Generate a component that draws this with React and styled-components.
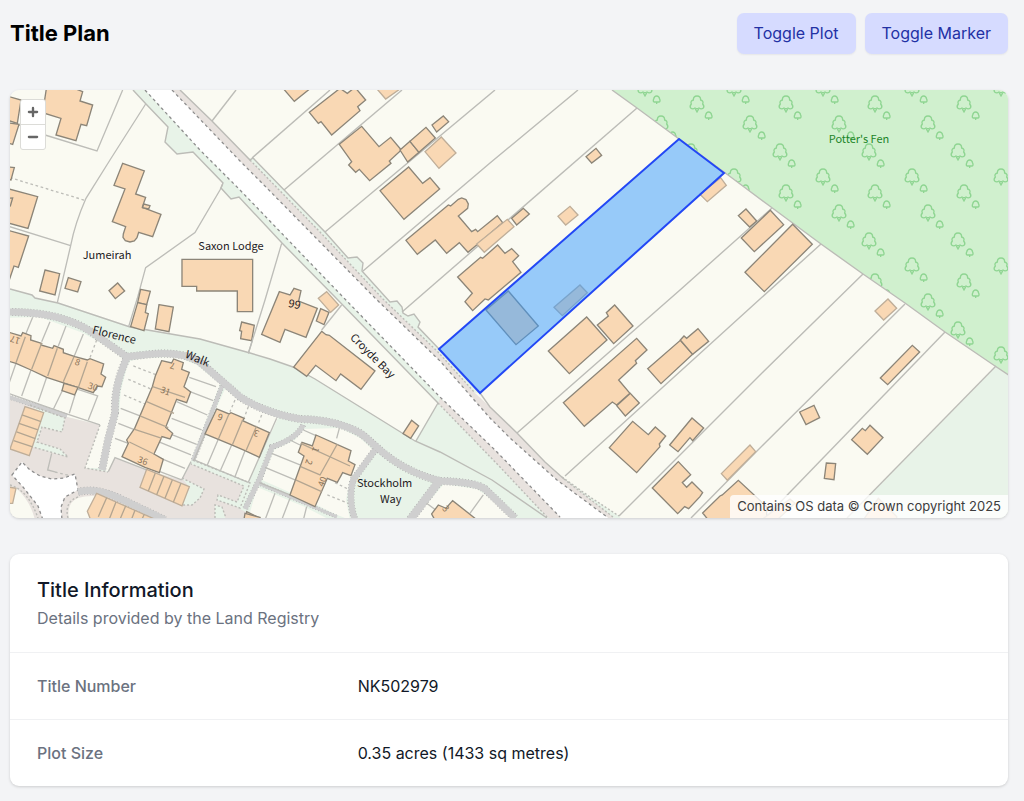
import { useState } from 'react';
import styled, { createGlobalStyle } from 'styled-components';
import { FiPlus, FiMinus } from 'react-icons/fi';

const ground = {
  woods:
    '612,90 637,108 679,139 724,172 771,207 821,244 863,274 905,303 945,332 995,366 1008,375 1020,384 1020,80 598,80',
  field: '996,367 1020,384 1020,530 836,530',
  verge:
    '133,90 146,104 168,127 165,142 177,154 193,152 223,183 221,188 231,199 239,197 282,243 335,297 438,403 450,403 250,170 172,80 124,80',
  common:
    '0,287 10,289 32,295 35,298 58,303 130,327 200,339 250,353 270,359 293,367 315,379 415,441 438,403 500,465 560,525 0,530',
  eastVerge:
    '253,158 325,232 348,258 357,257 363,263 362,271 390,302 397,301 402,307 403,313 408,316 414,314 420,322 418,327 439,349 480,393 470,393 240,158',
  southVerge: '562,477 590,497 619,516 622,520 608,520 555,472',
  pavementEast:
    '170,80 180,90 212,121 250,160 320,232 383,299 438,352 475,393 490,407 517,433 545,462 564,479 613,517 600,530 160,90',
  pavementWest: '440,398 438,403 500,467 547,517 575,530 575,517',
  road: '135,80 145,90 200,150 240,190 343,297 440,397 495,450 560,517 575,532 625,532 607,517 557,480 510,438 490,418 440,361 375,298 260,181 240,161 172,90 162,80',
};

const gardens = [
  '0,318 40,317 83,333 110,348 124,360 120,370 113,390 112,413 105,440 100,468 85,468 100,425 67,417 0,396',
  '130,361 143,358 177,357 197,365 220,384 192,458 190,463 181,480 147,470 115,458 108,472 105,470 111,440 119,413 121,390 127,367',
  '225,389 243,402 278,418 248,482 193,460',
  '303,429 340,428 360,438 373,450 350,480 346,500 350,520 335,514 307,500 262,480 274,450 295,440',
  '257,487 305,507 330,520 248,520',
  '444,484 477,489 497,503 514,520 413,520',
];

const yard =
  '0,394 67,417 100,425 85,468 108,472 115,458 147,470 181,480 192,462 247,487 238,508 262,520 0,520';

const lawns = [
  '30,405 65,418 62,432 42,427 37,442 60,449 68,457 33,447 43,414',
  '182,478 204,489 200,498 192,505 180,505 190,488',
  '193,460 250,483 240,508 217,500 218,495 237,502 244,486 191,464',
  '215,505 222,507 226,520 215,520',
];

const turning =
  '12,475 22,462 30,470 40,476 52,479 64,478 75,474 78,490 65,497 61,507 62,520 43,520 38,506 23,487';

const kerbs = [
  'M145,90 L200,150 L240,190 L343,297 L440,397 L495,450 L560,517',
  'M172,90 L240,161 L260,181 L375,298 L440,361 L490,418 L510,438 L557,480 L607,517',
];

const footpaths = [
  { w: 7, d: 'M0,312 L10,312 Q60,312 90,331 L127,357' },
  { w: 7, d: 'M125,357 L143,355 Q180,350 200,362 L223,382 L240,397 Q265,413 300,419 Q340,420 363,435 L380,450 Q405,472 440,481 Q475,482 485,489 L515,518' },
  { w: 7, d: 'M127,357 L123,367 Q114,390 115,413 L108,440 L102,470' },
  { w: 4, d: 'M222,386 L193,461' },
  { w: 5, d: 'M303,425 Q298,438 272,447 L260,478 L245,509' },
  { w: 6, d: 'M375,450 L353,480 Q348,500 355,520' },
  { w: 3, d: 'M258,483 L307,504 L337,517' },
  { w: 8, d: 'M440,480 L410,520' },
  { w: 7, d: 'M78,492 Q97,487 123,500 L165,520' },
  { w: 4, d: 'M0,394 L67,416' },
];

const boundaries = [
  'M252,158 L330,90',
  'M284,190 L402,90',
  'M325,232 L495,90',
  'M363,271 L490,163 L578,90',
  'M402,312 L637,108',
  'M517,433 L680,290 L772,208',
  'M565,476 L760,299 L821,244',
  'M619,516 L760,375 L863,274',
  'M691,518 L756,452 L905,304',
  'M765,518 L945,332',
  'M847,518 L996,366',
  'M212,121 L236,90',
  'M612,90 L637,108 L679,139 L724,172 L771,207 L821,244 L863,274 L905,303 L945,332 L995,366 L1010,376',
  'M133,90 L146,104 L168,127 L165,142 L177,154 L193,152 L223,183 L221,188 L231,199 L239,197 L282,243 L335,297 L438,403',
  'M180,90 L212,121 L250,160 L253,158 L325,232 L348,258 L357,257 L363,263 L362,271 L390,302 L397,301 L402,307 L403,313 L408,316 L414,314 L420,322 L418,327 L439,349',
  'M480,393 L490,407 L517,433 L545,462 L564,479',
  'M10,289 L32,295 L35,298 L58,303 L130,327 L200,339 L250,353 L270,359 L293,367 L315,379 L415,441 L440,452 L492,480 L547,518',
  'M438,403 L416,441',
];

const dotted = [
  'M250,160 L320,232 L383,299 L438,352 L475,393',
  'M564,479 L613,517',
  'M562,477 L590,497 L619,516',
  'M438,403 L500,467 L547,517',
  'M100,425 L85,468 L108,472',
  'M30,405 L65,418 L62,432 L42,427 L37,442 L60,449 L68,457 L33,447',
  'M182,478 L204,489 L200,498 L192,505 L180,505',
  'M193,460 L250,483 L240,508 L217,500 L218,495 L237,502 L244,486 L191,464',
  'M215,518 L215,505 L222,507 L226,518',
  'M10,485 Q28,490 38,518',
  'M68,518 Q64,502 78,497',
];

/* Survey sheets. Shapes are digitised at three units to the map pixel. */
const sheets = [
  {
    x: 0,
    y: 80,
    lots: [
      'M368,30 L291,213 L135,165',
      'M437,72 L330,240 L258,355 Q225,430 212,497 L172,668',
      'M20,437 L212,497',
      'M668,312 L660,330 L585,458 L437,563 L412,655 L386,740',
      'M20,128 L60,136',
    ],
    dashes: ['M30,293 L258,362'],
    buildings: [
      '140,20 215,22 248,35 240,63 278,75 260,137 243,133 228,182 168,165 183,115 128,98',
      '20,48 63,60 52,130 20,120',
      '20,128 57,133 38,193 20,188',
      '20,260 43,263 33,300 20,296',
      '20,325 113,350 84,445 20,428',
      '20,355 38,354 31,378 20,376',
      '20,450 86,468 55,562 42,558 28,600 20,600',
      '368,250 433,273 407,342 437,352 427,382 483,403 458,470 416,457 411,473 403,483 390,486 376,482 369,472 370,462 377,440 337,425 375,327 342,316',
      '431,372 450,377 446,387 428,383',
      '135,570 179,581 165,645 119,633',
      '205,593 243,605 233,636 195,625',
      '353,609 374,633 346,656 327,632',
      '546,538 758,538 758,695 712,695 712,633 590,633 590,619 546,619',
    ],
  },
  {
    x: 0,
    y: 290,
    lots: [
      'M98,82 L76,135 M150,95 L125,155 M198,108 L175,168 M250,132 L222,200',
      'M48,220 L20,300 M93,240 L65,318 M140,262 L115,335 M188,300 L160,358 M225,315 L208,370 M234,298 L293,318 L265,390',
      'M20,308 L200,372 L300,405',
      'M568,262 L648,290 M570,305 L640,332 M530,335 L622,375 M515,385 L605,420 M510,432 L590,463 M475,455 L573,495 M470,500 L555,535 M480,545 L545,570',
      'M362,355 L420,378 M355,400 L405,420 M345,445 L385,460',
      'M325,545 L345,503 L440,540 M573,515 L545,570',
      'M615,432 L582,510 L745,577 M655,448 L622,525 M695,465 L662,540 M735,482 L705,560 M778,502 L745,577 L830,385',
      'M155,490 L143,540 L165,546',
      'M757,152 L745,190',
    ],
    dashes: [
      'M290,150 L268,208',
      'M400,228 L470,255 M385,268 L455,298 M372,315 L435,342',
      'M705,330 L690,365 M745,350 L733,382 M785,375 L775,400',
      'M165,546 L205,556',
    ],
    buildings: [
      '422,-2 451,4 440,44 413,38',
      '413,38 440,44 436,68 445,71 432,122 392,110',
      '477,44 520,51 507,125 466,117',
      '725,96 763,106 755,152 722,146 725,124 719,122',
      '20,125 63,138 68,128 93,137 92,150 125,160 123,165 158,175 162,167 190,178 190,188 225,200 262,210 270,206 311,222 303,252 317,262 306,290 292,288 280,308 235,293 188,278 140,262 93,240 48,220 20,212',
      '192,280 234,292 224,315 186,302',
      '485,212 515,219 521,207 550,218 545,238 568,247 552,290 572,306 560,338 530,328 497,412 518,430 510,447 486,440 462,492 490,508 478,548 435,532 366,500 385,460 380,450 404,415 457,290 466,258',
      '650,357 687,372 693,368 733,385 728,392 808,428 778,502 735,482 695,465 655,448 615,432',
      '740,665 790,690 735,700',
    ],
    sheds: [
      '75,350 131,368 88,497 30,477',
      '440,538 568,590 546,648 420,592',
      '290,610 470,690 470,710 280,710 262,664',
      '20,590 48,595 38,640 20,640',
    ],
    walls: [
      'M76,140 L48,218 M125,160 L95,238 M172,175 L143,258 M222,200 L190,275 M262,215 L235,293',
      'M66,375 L123,395 M57,400 L114,420 M50,426 L106,446 M41,452 L98,471',
      'M458,290 L555,322 M440,335 L522,370 M420,378 L505,413 M404,418 L486,445 M388,456 L462,492',
      'M466,549 L445,603 M492,559 L470,614 M517,570 L495,625 M543,580 L520,637',
      'M320,623 L295,680 M348,636 L325,695 M377,648 L355,700 M405,661 L390,700 M433,673 L420,700',
      'M687,372 L655,448 M728,390 L697,465 M770,408 L738,482',
    ],
    labels: [
      { x: 340, y: 146, r: 14, t: 'Florence' },
      { x: 588, y: 216, r: 22, t: 'Walk' },
      { x: 230, y: 226, r: 17, t: '8', house: true },
      { x: 276, y: 299, r: 17, t: '30', house: true },
      { x: 48, y: 140, r: 197, t: '17', house: true },
      { x: 521, y: 218, r: 197, t: '7', house: true },
      { x: 493, y: 312, r: 20, t: '31', house: true },
      { x: 425, y: 521, r: 20, t: '36', house: true },
      { x: 663, y: 372, r: 197, t: '6', house: true },
      { x: 772, y: 421, r: 197, t: '3', house: true },
    ],
  },
  {
    x: 240,
    y: 80,
    lots: ['M125,490 L75,660 L25,820'],
    buildings: [
      '118,12 163,64 225,14 225,0 118,0',
      '208,97 300,25 322,40 345,22 377,60 353,80 360,92 275,165 243,125 235,130',
      '298,193 365,139 417,200 452,172 484,210 448,243 453,250 389,302 358,268 347,277 326,255 335,245',
      '480,210 510,184 537,217 503,246',
      '510,184 558,142 586,174 537,217',
      '576,135 610,108 626,125 590,156',
      '420,332 506,261 548,310 570,293 599,327 492,418',
      '498,481 625,375 632,378 655,358 665,354 678,359 685,372 683,385 655,408 695,455 707,448 713,455 772,407 788,428 710,495 684,517 658,488 620,520 586,480 532,523',
      '653,591 722,532 728,535 773,495 795,520 815,506 836,527 818,545 843,577 745,660 735,657 698,692 675,665 697,640',
    ],
    sheds: ['405,20 490,20 437,57', '555,215 604,171 648,219 597,265', '710,492 802,418 822,440 733,517'],
  },
  {
    x: 240,
    y: 290,
    lots: [
      'M305,45 L245,120',
      'M190,420 L228,437 M298,415 L290,445 M150,450 L186,468 M95,490 L180,525 M75,532 L165,570',
      'M58,578 L150,615 M105,610 L75,690 M150,625 L125,690 M200,650 L190,690',
      'M560,640 L590,662 M730,615 L690,670',
    ],
    dashes: ['M285,578 L330,600 M262,615 L325,640'],
    buildings: [
      '118,5 150,15 162,-5 183,2 176,33 232,55 198,142 135,118 120,157 65,133',
      '242,56 267,67 252,104 229,93',
      '245,124 258,134 268,136 405,243 363,298 302,252 288,272 227,226 200,259 161,231',
      '515,391 536,408 512,445 489,431',
      '228,435 333,482 325,513 345,524 333,557 308,548 292,577 262,565 225,650 150,615 192,498 175,487 186,457 217,468',
      '575,672 595,645 618,655 638,632 705,685 705,700 590,700',
      '15,670 60,682 50,700 10,700',
    ],
    sheds: ['235,25 260,5 296,45 272,67'],
    walls: ['M182,460 L330,528 M292,462 L240,555 L182,530 M167,570 L245,605'],
    labels: [
      { x: 161, y: 54, r: 12, t: '99' },
      { x: 390, y: 206, r: 45, t: 'Croyde Bay' },
      { x: 434, y: 590, r: 0, t: 'Stockholm' },
      { x: 452, y: 638, r: 0, t: 'Way' },
      { x: 218, y: 475, r: 110, t: '1', house: true },
      { x: 198, y: 513, r: 110, t: '2', house: true },
      { x: 256, y: 578, r: 290, t: '40', house: true },
      { x: 610, y: 662, r: 50, t: '3', house: true },
    ],
  },
  {
    x: 490,
    y: 80,
    buildings: [
      '65,415 100,385 118,402 80,435',
      '288,230 318,205 335,226 305,249',
      '745,407 768,387 800,423 779,441',
      '754,474 841,391 881,434 793,515',
      '765,577 908,433 967,493 823,635',
    ],
    sheds: ['204,409 240,379 264,405 227,435', '630,343 692,293 709,316 652,365'],
  },
  {
    x: 490,
    y: 290,
    buildings: [
      '-12,60 55,3 145,108 78,164',
      '175,183 290,81 351,150 238,251',
      '322,105 355,78 349,68 374,45 429,108 371,161',
      '220,338 440,145 471,180 436,212 440,220 386,270 420,310 380,345 367,336 283,409',
      '380,347 421,310 448,339 406,378',
      '473,236 571,151 608,193 513,281',
      '571,150 582,138 590,145 624,116 656,154 608,193',
      '358,473 428,394 475,434 496,411 527,438 508,462 510,470 440,548',
      '539,465 606,384 641,414 608,452 600,443 564,485',
      '487,594 565,515 602,554 577,578 590,592 606,576 638,608 630,620 596,656 584,650 563,671',
      '638,669 690,618 697,615 745,571 830,650 830,690 655,690',
    ],
    sheds: ['192,52 270,-15 292,8 217,77', '694,551 780,465 797,485 712,571'],
  },
  {
    x: 750,
    y: 290,
    buildings: [
      '391,264 487,166 509,186 413,284',
      '149,366 192,346 209,383 168,404',
      '305,449 337,415 346,422 360,406 399,443 352,493',
      '229,519 257,521 252,569 223,565',
    ],
    sheds: ['375,63 414,27 440,55 401,90', '20,700 120,627 135,640 70,700', '340,690 385,625 440,680 440,700'],
  },
];

const trees = [
  [36, 14],
  [0, 34],
  [30, 62],
  [73, 87],
];

const placeNames = [
  { x: 107, y: 259, t: 'Jumeirah' },
  { x: 231, y: 250, t: 'Saxon Lodge' },
];

const plotPoints = '439,349 679,139 724,173 480,393';

const Woodland = () => {
  const cells = [];
  for (let col = -2; col < 4; col++) {
    for (let row = -1; row < 4; row++) {
      trees.forEach(([x, y]) => {
        cells.push([750 + col * 89 + x, 90 + row * 89 + y]);
      });
    }
  }

  return (
    <g clipPath="url(#woods)">
      {cells.map(([x, y]) => (
        <Tree key={`${x}-${y}`} transform={`translate(${x} ${y}) scale(0.333)`}>
          <path d="M-11,-12 Q-11,-24 0,-24 Q11,-24 11,-12 Q21,-9 17,0 Q23,7 19,12 Q13,17 6,12 Q0,16 -6,12 Q-13,17 -19,12 Q-23,7 -17,0 Q-21,-9 -11,-12Z M-5,15 L0,24 L5,15" />
          <path d="M31,42 H28 Q23,41 26,33 Q28,24 35,24 Q42,24 44,33 Q47,41 42,42 H31 M35,42 V48" />
        </Tree>
      ))}
    </g>
  );
};

const Sheet = ({ sheet }) => {
  const { x, y, lots = [], dashes = [], buildings = [], sheds = [], walls = [] } = sheet;

  return (
    <g transform={`translate(${x} ${y}) scale(0.3333)`}>
      {lots.map((d) => (
        <Lot key={d} d={d} />
      ))}
      {dashes.map((d) => (
        <Lot key={d} d={d} $dashed />
      ))}
      {buildings.map((points) => (
        <Building key={points} points={points} />
      ))}
      {sheds.map((points) => (
        <Building key={points} points={points} $light />
      ))}
      {walls.map((d) => (
        <Lot key={d} d={d} $wall />
      ))}
    </g>
  );
};

const SheetLabels = ({ sheet }) =>
  (sheet.labels || []).map(({ x, y, r, t, house }) => (
    <MapLabel
      key={t + x}
      $house={house}
      transform={`translate(${sheet.x + x / 3} ${sheet.y + y / 3}) rotate(${r})`}
    >
      {t}
    </MapLabel>
  ));

const PlanMap = ({ showPlot, showMarker }) => (
  <MapSvg viewBox="10 90 998 428" role="img" aria-label="Title plan map">
    <defs>
      <clipPath id="woods">
        <polygon points={ground.woods} />
      </clipPath>
    </defs>
    <rect x="0" y="80" width="1020" height="450" fill="#fafaf2" />
    <polygon points={ground.woods} fill="#d0f0ce" />
    <Woodland />
    <polygon points={ground.field} fill="#e8f3e8" />
    <polygon points={ground.common} fill="#e8f3e8" />
    <polygon points={ground.verge} fill="#e8f3e8" />
    <polygon points={ground.eastVerge} fill="#e8f3e8" />
    <polygon points={ground.southVerge} fill="#e8f3e8" />
    {gardens.map((points) => (
      <polygon key={points} points={points} fill="#fafaf2" />
    ))}
    <polygon points={yard} fill="#e8e2de" />
    {lawns.map((points) => (
      <polygon key={points} points={points} fill="#e8f3e8" />
    ))}
    <path d="M0,486 L16,488 Q30,500 35,520 L0,520Z M69,520 Q66,503 78,498 Q97,492 120,503 L160,520Z" fill="#fafaf2" />
    <Kerb as="polygon" points={turning} fill="#fff" />
    <polygon points={ground.pavementWest} fill="#e8e2de" />
    <polygon points={ground.pavementEast} fill="#e8e2de" />
    <polygon points={ground.road} fill="#fff" />
    {kerbs.map((d) => (
      <Kerb key={d} d={d} />
    ))}
    {footpaths.map(({ d, w }) => (
      <PathEdge key={d} d={d} strokeWidth={w + 1} />
    ))}
    {footpaths.map(({ d, w }) => (
      <path key={d} d={d} fill="none" stroke="#cfcfcf" strokeWidth={w} />
    ))}
    {boundaries.map((d) => (
      <Boundary key={d} d={d} />
    ))}
    {dotted.map((d) => (
      <Boundary key={d} d={d} $dotted />
    ))}
    {sheets.map((sheet) => (
      <Sheet key={`${sheet.x}-${sheet.y}`} sheet={sheet} />
    ))}
    {sheets.map((sheet) => (
      <SheetLabels key={`${sheet.x}-${sheet.y}`} sheet={sheet} />
    ))}
    {placeNames.map(({ x, y, t }) => (
      <MapLabel key={t} x={x} y={y}>
        {t}
      </MapLabel>
    ))}
    <MapLabel x="859" y="143" $wood>
      Potter's Fen
    </MapLabel>
    {showPlot && <Plot points={plotPoints} />}
    {showMarker && (
      <path
        d="M581,266 Q569,250 569,242 A12,12 0 0 1 593,242 Q593,250 581,266Z"
        fill="#2b4bf2"
        stroke="#fff"
      />
    )}
  </MapSvg>
);

const App = () => {
  const [showPlot, setShowPlot] = useState(true);
  const [showMarker, setShowMarker] = useState(false);

  return (
    <Page>
      <GlobalStyle />
      <Header>
        <h1>Title Plan</h1>
        <Actions>
          <ToggleButton type="button" onClick={() => setShowPlot(!showPlot)}>
            Toggle Plot
          </ToggleButton>
          <ToggleButton type="button" onClick={() => setShowMarker(!showMarker)}>
            Toggle Marker
          </ToggleButton>
        </Actions>
      </Header>
      <MapFrame>
        <PlanMap showPlot={showPlot} showMarker={showMarker} />
        <ZoomControl>
          <ZoomButton type="button" aria-label="Zoom in">
            <FiPlus size="14" strokeWidth="4" />
          </ZoomButton>
          <ZoomButton type="button" aria-label="Zoom out">
            <FiMinus size="14" strokeWidth="4" />
          </ZoomButton>
        </ZoomControl>
        <Attribution>Contains OS data © Crown copyright 2025</Attribution>
      </MapFrame>
      <Card>
        <CardHeader>
          <h2>Title Information</h2>
          <p>Details provided by the Land Registry</p>
        </CardHeader>
        <Details>
          <DetailRow>
            <dt>Title Number</dt>
            <dd>NK502979</dd>
          </DetailRow>
          <DetailRow>
            <dt>Plot Size</dt>
            <dd>0.35 acres (1433 sq metres)</dd>
          </DetailRow>
        </Details>
      </Card>
    </Page>
  );
};

const GlobalStyle = createGlobalStyle`
  * {
    box-sizing: border-box;
  }
  body {
    margin: 0;
    background-color: #f3f4f6;
    font-family: Inter, sans-serif;
    font-size: 16px;
    line-height: 24px;
    color: #111827;
  }
`;

const Page = styled.main`
  padding: 13px 16px 14px 10px;
`;

const Header = styled.header`
  display: flex;
  align-items: flex-start;
  justify-content: space-between;
  margin-bottom: 36px;

  h1 {
    margin: 0;
    font-size: 22px;
    line-height: 40px;
    font-weight: 700;
    color: #000;
  }
`;

const Actions = styled.div`
  display: flex;
  gap: 9px;
`;

const ToggleButton = styled.button`
  padding: 8px 17px;
  border: 0;
  border-radius: 7px;
  background-color: #d6dbff;
  box-shadow: 0 1px 2px rgba(0, 0, 0, 0.06);
  color: #2231a4;
  font: inherit;
  line-height: 25px;
  cursor: pointer;
`;

const MapFrame = styled.section`
  position: relative;
  overflow: hidden;
  margin-bottom: 36px;
  border-radius: 9px;
  box-shadow: 0 1px 3px rgba(0, 0, 0, 0.16);
`;

const MapSvg = styled.svg`
  display: block;
  width: 100%;
  height: auto;
`;

const Tree = styled.g`
  fill: none;
  stroke: #8fd592;
  stroke-width: 4;
`;

const Lot = styled.path`
  fill: none;
  stroke: ${({ $wall }) => ($wall ? '#b3a591' : '#bdbdb8')};
  stroke-width: 4;
  stroke-dasharray: ${({ $dashed }) => ($dashed ? '8 8' : 'none')};
`;

const Building = styled.polygon`
  fill: #f9d8b4;
  stroke: ${({ $light }) => ($light ? '#bfae99' : '#8c8578')};
  stroke-width: 4;
`;

const Kerb = styled.path`
  stroke: #8d8d8d;
  stroke-width: 1.3;
  stroke-dasharray: 3 3;
  ${({ d }) => d && 'fill: none;'}
`;

const PathEdge = styled.path`
  fill: none;
  stroke: #a3a3a3;
  stroke-dasharray: 1 2;
`;

const Boundary = styled.path`
  fill: none;
  stroke: #bcbcb7;
  stroke-width: 1.4;
  stroke-dasharray: ${({ $dotted }) => ($dotted ? '2 2' : 'none')};
`;

const Plot = styled.polygon`
  fill: rgba(51, 154, 255, 0.5);
  stroke: #2348f5;
  stroke-width: 2;
`;

const MapLabel = styled.text`
  font-family: 'Noto Sans CJK SC', sans-serif;
  font-size: ${({ $house }) => ($house ? 9 : 11)}px;
  font-weight: 400;
  text-anchor: middle;
  fill: ${({ $house, $wood }) => ($wood ? '#1c8528' : $house ? '#8a7358' : '#1d2023')};
`;

const ZoomControl = styled.div`
  position: absolute;
  top: 9px;
  left: 10px;
  display: flex;
  flex-direction: column;
  gap: 1px;
  border: 1px solid #dcdcd8;
  border-radius: 3px;
  background-color: #dcdcd8;
  overflow: hidden;
`;

const ZoomButton = styled.button`
  display: flex;
  align-items: center;
  justify-content: center;
  width: 24px;
  height: 24px;
  padding: 0;
  border: 0;
  background-color: #fff;
  color: #666;
  cursor: pointer;
`;

const Attribution = styled.div`
  position: absolute;
  right: 0;
  bottom: 0;
  padding: 0 7px;
  border-top-left-radius: 4px;
  background-color: rgba(255, 255, 255, 0.8);
  color: #3c3c3c;
  font-size: 13px;
  line-height: 23px;
`;

const Card = styled.section`
  border-radius: 9px;
  background-color: #fff;
  box-shadow: 0 1px 3px rgba(0, 0, 0, 0.16);
`;

const CardHeader = styled.div`
  padding: 22px 27px;

  h2 {
    margin: 0;
    font-size: 20px;
    line-height: 28px;
    font-weight: 500;
  }

  p {
    margin: 2px 0 0;
    color: #6b7280;
  }
`;

const Details = styled.dl`
  margin: 0;
`;

const DetailRow = styled.div`
  display: grid;
  grid-template-columns: repeat(3, minmax(0, 1fr));
  gap: 18px;
  padding: 21px 27px;
  border-top: 1px solid #f0f1f3;

  dt {
    color: #6b7280;
    font-weight: 500;
  }

  dd {
    grid-column: span 2;
    margin: 0;
  }
`;

export default App;
